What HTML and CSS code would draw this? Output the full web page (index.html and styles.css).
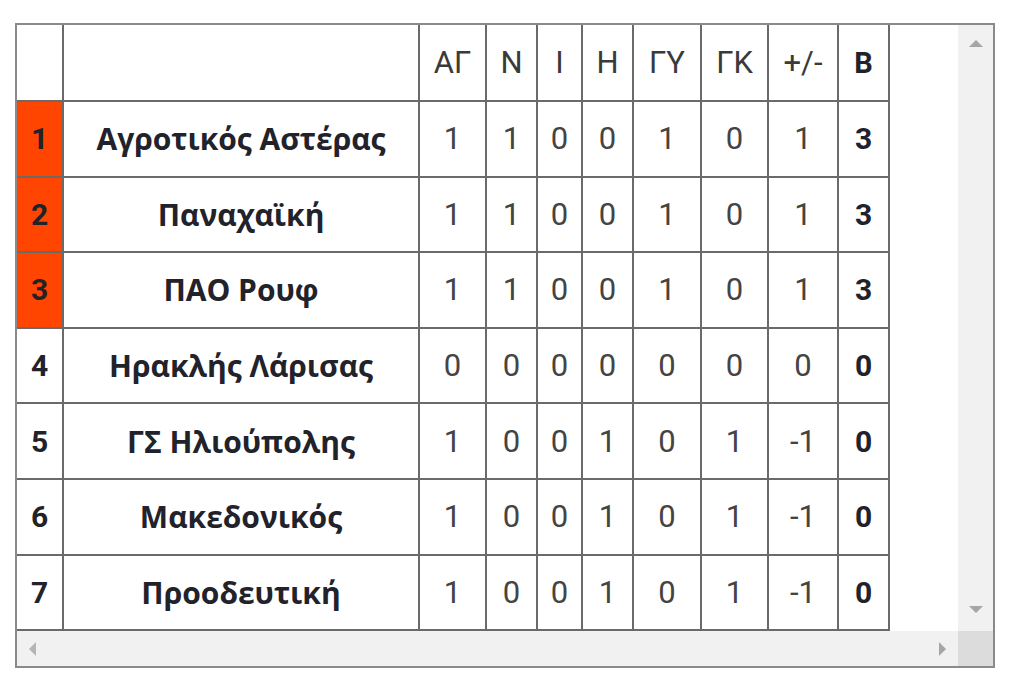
FILE: index.html
```html
<!DOCTYPE html>
<html>
<head>
<meta charset="utf-8">
<link rel="stylesheet" href="styles.css">
</head>
<body>
<div class="frame">
  <div class="view">
    <table class="standings">
      <colgroup>
        <col style="width:46px"><col style="width:356px"><col style="width:67px"><col style="width:51px"><col style="width:45px"><col style="width:51px"><col style="width:68px"><col style="width:67px"><col style="width:70px"><col style="width:51px">
      </colgroup>
      <thead>
        <tr><th></th><th></th><th>ΑΓ</th><th>Ν</th><th>Ι</th><th>Η</th><th>ΓΥ</th><th>ΓΚ</th><th>+/-</th><th class="pts">Β</th></tr>
      </thead>
      <tbody>
        <tr><td class="rank hot">1</td><td class="team">Αγροτικός Αστέρας</td><td>1</td><td>1</td><td>0</td><td>0</td><td>1</td><td>0</td><td>1</td><td class="pts">3</td></tr>
        <tr><td class="rank hot">2</td><td class="team">Παναχαϊκή</td><td>1</td><td>1</td><td>0</td><td>0</td><td>1</td><td>0</td><td>1</td><td class="pts">3</td></tr>
        <tr><td class="rank hot">3</td><td class="team">ΠΑΟ Ρουφ</td><td>1</td><td>1</td><td>0</td><td>0</td><td>1</td><td>0</td><td>1</td><td class="pts">3</td></tr>
        <tr><td class="rank">4</td><td class="team">Ηρακλής Λάρισας</td><td>0</td><td>0</td><td>0</td><td>0</td><td>0</td><td>0</td><td>0</td><td class="pts">0</td></tr>
        <tr><td class="rank">5</td><td class="team">ΓΣ Ηλιούπολης</td><td>1</td><td>0</td><td>0</td><td>1</td><td>0</td><td>1</td><td>-1</td><td class="pts">0</td></tr>
        <tr><td class="rank">6</td><td class="team">Μακεδονικός</td><td>1</td><td>0</td><td>0</td><td>1</td><td>0</td><td>1</td><td>-1</td><td class="pts">0</td></tr>
        <tr><td class="rank">7</td><td class="team">Προοδευτική</td><td>1</td><td>0</td><td>0</td><td>1</td><td>0</td><td>1</td><td>-1</td><td class="pts">0</td></tr>
      </tbody>
    </table>
  </div>
  <div class="vbar">
    <span class="arrow up"></span>
    <span class="arrow down"></span>
  </div>
  <div class="hbar">
    <span class="arrow left"></span>
    <span class="arrow right"></span>
  </div>
  <div class="corner"></div>
</div>
</body>
</html>
```
FILE: styles.css
```css
html, body {
  margin: 0;
  padding: 0;
  background: #ffffff;
}
body {
  padding: 23px 0 0 15px;
}
.frame {
  width: 980px;
  height: 645px;
  box-sizing: border-box;
  border: 2px solid #8a8a8a;
  display: grid;
  grid-template-columns: 1fr 35px;
  grid-template-rows: 1fr 35px;
  background: #fff;
}
.view {
  overflow: hidden;
}
.standings {
  border-collapse: collapse;
  table-layout: fixed;
  width: 872px;
  font-family: Roboto, "Liberation Sans", sans-serif;
}
.standings th,
.standings td {
  border: 2px solid #6a6a6a;
  height: 73.6px;
  padding: 0;
  text-align: center;
  vertical-align: middle;
  font-size: 31px;
  font-weight: 400;
  color: #444;
}
.standings thead th {
  height: 75px;
  border-top: none;
  color: #3a3a3a;
}
.standings tr > *:first-child {
  border-left: none;
}
.standings .team {
  font-family: "Open Sans", "Noto Sans", sans-serif;
  font-weight: 700;
  color: #22222a;
  font-size: 30px;
}
.standings .rank,
.standings .pts {
  font-family: Roboto, "Liberation Sans", sans-serif;
  font-weight: 700;
  color: #22222a;
  font-size: 30px;
}
.standings thead .pts {
  font-size: 29px;
}
.standings .hot {
  background: #ff4500;
}
.vbar {
  background: #f1f1f1;
  display: flex;
  flex-direction: column;
  justify-content: space-between;
  align-items: center;
  padding: 15px 0 18px;
}
.hbar {
  background: #f1f1f1;
  display: flex;
  justify-content: space-between;
  align-items: center;
  padding: 0 12px 0 12px;
}
.corner {
  background: #dcdcdc;
}
.arrow {
  width: 0;
  height: 0;
  display: block;
}
.up {
  border-left: 7px solid transparent;
  border-right: 7px solid transparent;
  border-bottom: 7px solid #a6a6a6;
}
.down {
  border-left: 7px solid transparent;
  border-right: 7px solid transparent;
  border-top: 7px solid #a6a6a6;
}
.left {
  border-top: 7px solid transparent;
  border-bottom: 7px solid transparent;
  border-right: 7px solid #b5b5b5;
}
.right {
  border-top: 7px solid transparent;
  border-bottom: 7px solid transparent;
  border-left: 7px solid #a6a6a6;
}
```
